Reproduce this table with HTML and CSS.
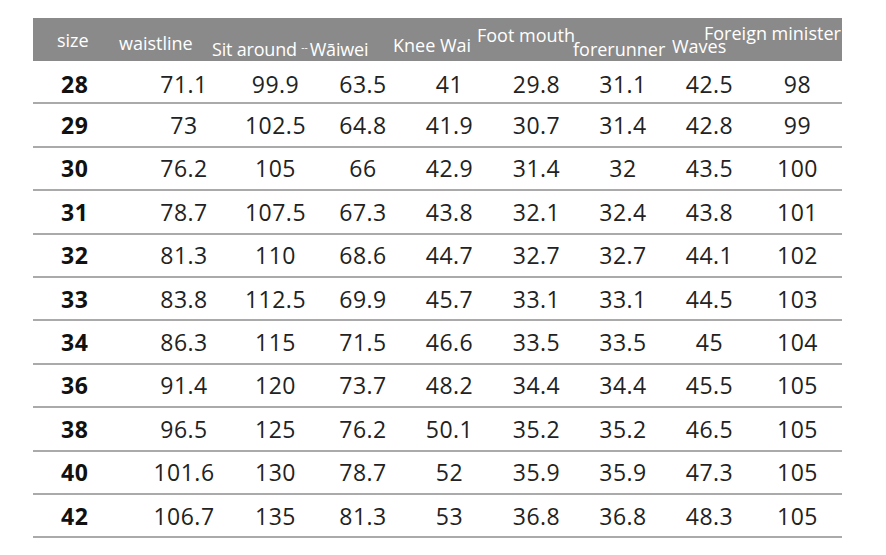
FILE: index.html
```html
<!DOCTYPE html>
<html>
<head>
<meta charset="utf-8">
<link rel="stylesheet" href="styles.css">
</head>
<body>
<div class="sheet">
  <div class="head">
    <span class="h h-size">size</span>
    <span class="h h-waist">waistline</span>
    <span class="h h-sit">Sit around <span class="dash">--</span>Wāiwei</span>
    <span class="h h-knee">Knee Wai</span>
    <span class="h h-foot">Foot mouth</span>
    <span class="h h-fore">forerunner</span>
    <span class="h h-waves">Waves</span>
    <span class="h h-foreign">Foreign minister</span>
  </div>
  <div class="rows">
    <div class="row first"><b>28</b><span>71.1</span><span>99.9</span><span>63.5</span><span>41</span><span>29.8</span><span>31.1</span><span>42.5</span><span>98</span></div>
    <div class="row"><b>29</b><span>73</span><span>102.5</span><span>64.8</span><span>41.9</span><span>30.7</span><span>31.4</span><span>42.8</span><span>99</span></div>
    <div class="row"><b>30</b><span>76.2</span><span>105</span><span>66</span><span>42.9</span><span>31.4</span><span>32</span><span>43.5</span><span>100</span></div>
    <div class="row"><b>31</b><span>78.7</span><span>107.5</span><span>67.3</span><span>43.8</span><span>32.1</span><span>32.4</span><span>43.8</span><span>101</span></div>
    <div class="row"><b>32</b><span>81.3</span><span>110</span><span>68.6</span><span>44.7</span><span>32.7</span><span>32.7</span><span>44.1</span><span>102</span></div>
    <div class="row"><b>33</b><span>83.8</span><span>112.5</span><span>69.9</span><span>45.7</span><span>33.1</span><span>33.1</span><span>44.5</span><span>103</span></div>
    <div class="row"><b>34</b><span>86.3</span><span>115</span><span>71.5</span><span>46.6</span><span>33.5</span><span>33.5</span><span>45</span><span>104</span></div>
    <div class="row"><b>36</b><span>91.4</span><span>120</span><span>73.7</span><span>48.2</span><span>34.4</span><span>34.4</span><span>45.5</span><span>105</span></div>
    <div class="row"><b>38</b><span>96.5</span><span>125</span><span>76.2</span><span>50.1</span><span>35.2</span><span>35.2</span><span>46.5</span><span>105</span></div>
    <div class="row"><b>40</b><span>101.6</span><span>130</span><span>78.7</span><span>52</span><span>35.9</span><span>35.9</span><span>47.3</span><span>105</span></div>
    <div class="row"><b>42</b><span>106.7</span><span>135</span><span>81.3</span><span>53</span><span>36.8</span><span>36.8</span><span>48.3</span><span>105</span></div>
  </div>
</div>
</body>
</html>
```

FILE: styles.css
```css
html, body {
  margin: 0;
  padding: 0;
  background: #ffffff;
}

.sheet {
  width: 809px;
  margin: 18px 0 0 33px;
  font-family: "Open Sans", "Noto Sans", sans-serif;
}

.head {
  display: flex;
  align-items: flex-start;
  height: 43px;
  background: #8a8a8a;
  color: #ffffff;
  font-size: 18px;
  line-height: 20px;
  white-space: nowrap;
}

.h {
  display: block;
  flex: none;
}

.h-size { margin-left: 24px; width: 62px; padding-top: 12px; }
.h-waist { width: 93px; padding-top: 15px; }
.h-sit { width: 181px; padding-top: 21px; letter-spacing: -0.2px; }
.h-knee { width: 84px; padding-top: 17px; }
.h-foot { width: 96px; padding-top: 7px; }
.h-fore { width: 99px; padding-top: 21px; }
.h-waves { width: 32px; padding-top: 18px; }
.h-foreign { padding-top: 5px; }

.dash {
  font-size: 10px;
  position: relative;
  top: -5px;
  letter-spacing: 0;
  margin-right: 2px;
}

.row {
  display: grid;
  grid-template-columns: 104px 94px 89px 86px 87px 87px 86px 87px 89px;
  align-items: center;
  height: 43.4px;
  box-sizing: border-box;
  border-bottom: 2px solid #aaaaaa;
  font-size: 23px;
  color: #222222;
  letter-spacing: 0.5px;
}

.row.first {
  padding-top: 5px;
}

.row b {
  font-weight: 700;
  color: #111111;
  padding-left: 28px;
  letter-spacing: 0.5px;
}

.row span {
  text-align: center;
}
```
